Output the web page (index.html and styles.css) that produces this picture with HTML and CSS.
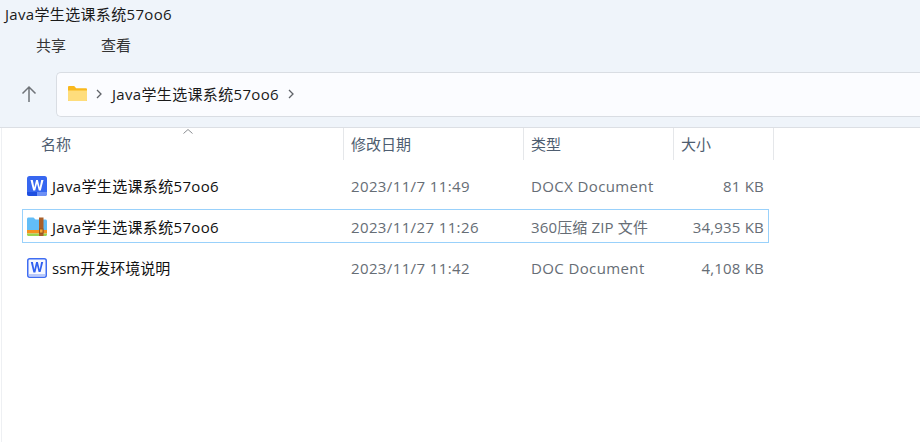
FILE: index.html
```html
<!DOCTYPE html>
<html lang="zh-CN">
<head>
<meta charset="utf-8">
<title>Java学生选课系统57oo6</title>
<link rel="stylesheet" href="styles.css">
</head>
<body>
<header class="top">
  <div class="title wide">Java学生选课系统57oo6</div>
  <nav class="menu"><span>共享</span><span>查看</span></nav>
  <div class="navbar">
    <svg class="up" width="18" height="18" viewBox="0 0 18 18" fill="none" stroke="#6f7378" stroke-width="1.5"><path d="M9 17V2M2.5 8.5 9 2l6.5 6.5"/></svg>
    <div class="address">
      <svg width="19" height="15" viewBox="0 0 19 15"><path d="M0 1.2C0 .5.5 0 1.2 0h5l2 2.2h9.6c.7 0 1.2.5 1.2 1.2V14c0 .6-.5 1-1.2 1H1.2C.5 15 0 14.600 0 14Z" fill="#f9b81d"/><path d="M0 4.500h19V14c0 .6-.5 1-1.200 1H1.200C.5 15 0 14.600 0 14Z" fill="#fedd7c"/></svg>
      <svg class="chev" width="6" height="10" viewBox="0 0 6 10" fill="none" stroke="#5f6368" stroke-width="1.300"><path d="m1 1 4 4-4 4"/></svg>
      <span class="crumb wide">Java学生选课系统57oo6</span>
      <svg class="chev" width="6" height="10" viewBox="0 0 6 10" fill="none" stroke="#5f6368" stroke-width="1.300"><path d="m1 1 4 4-4 4"/></svg>
    </div>
  </div>
</header>
<main class="list">
  <div class="head">
    <div class="col name">名称<svg class="sort" width="10" height="5" viewBox="0 0 10 5" fill="none" stroke="#8a8d91"><path d="m.5 4.500 4.500-4 4.500 4"/></svg></div>
    <div class="col">修改日期</div>
    <div class="col">类型</div>
    <div class="col">大小</div>
  </div>
  <div class="row">
    <div class="file">
      <svg width="20" height="20" viewBox="0 0 20 20"><rect width="20" height="20" rx="2.500" fill="#3767f0"/><path d="M0 16h10v4H2.500A2.500 2.500 0 0 1 0 17.500Z" fill="#1f4fe0"/><path d="M10 16h10v1.500a2.500 2.500 0 0 1-2.500 2.500H10Z" fill="#6d90f5"/><path d="M3.500 4h2.300l1.500 7.500L9.100 4h1.800l1.800 7.500L14.200 4h2.300l-2.700 10.500h-2L10 7.500l-1.800 7h-2Z" fill="#fff"/></svg>
      <span class="wide">Java学生选课系统57oo6</span>
    </div>
    <div class="cell">2023/11/7 11:49</div>
    <div class="cell">DOCX Document</div>
    <div class="cell size">81 KB</div>
  </div>
  <div class="row selected">
    <div class="file">
      <svg width="20" height="20" viewBox="0 0 20 20"><path d="M0 2c0-.8.600-1.500 1.500-1.500h5L8.500 2.500H18.500c.8 0 1.500.7 1.500 1.500v10H0Z" fill="#62bdf7"/><rect y="13" width="20" height="3.500" fill="#f5921e"/><path d="M0 16.500h20v1.300c0 .7-.5 1.200-1.200 1.200H1.200C.5 19 0 18.500 0 17.800Z" fill="#9ad450"/><rect x="12" y="0.500" width="4.500" height="18.500" fill="#a9602a"/><rect x="12.500" y="12" width="3.500" height="4" fill="#f5a83a" stroke="#8a4f1e" stroke-width=".8"/></svg>
      <span class="wide">Java学生选课系统57oo6</span>
    </div>
    <div class="cell">2023/11/27 11:26</div>
    <div class="cell zip">360压缩 ZIP 文件</div>
    <div class="cell size">34,935 KB</div>
  </div>
  <div class="row">
    <div class="file">
      <svg width="20" height="20" viewBox="0 0 20 20"><rect x=".75" y=".75" width="18.500" height="18.500" rx="2" fill="#f6f8ff" stroke="#3f6df2" stroke-width="1.500"/><rect x="2" y="16" width="16" height="2.500" fill="#b9c9fa"/><path d="M3.800 4h2.100l1.400 7.500L9.100 4h1.800l1.800 7.500L14.100 4h2.100l-2.600 10h-2L10 7.500 8.400 14.500h-2Z" fill="#2f5ff0"/></svg>
      <span>ssm开发环境说明</span>
    </div>
    <div class="cell">2023/11/7 11:42</div>
    <div class="cell">DOC Document</div>
    <div class="cell size">4,108 KB</div>
  </div>
</main>
</body>
</html>
```

FILE: styles.css
```css
* { box-sizing: border-box; }
html, body { height: 100%; }
body {
  margin: 0;
  background: #fff;
  color: #1a1a1a;
  font: 15px/20px "Open Sans", "Noto Sans CJK SC", sans-serif;
  overflow: hidden;
}
.wide { letter-spacing: .33px; }
.top {
  height: 128px;
  background: #eff4fa;
  border-bottom: 1px solid #dcdfe4;
  padding: 4px 0 0 5px;
}
.title { height: 20px; }
.menu {
  display: flex;
  gap: 35px;
  margin: 11px 0 0 31px;
  color: #333;
}
.navbar {
  display: flex;
  align-items: center;
  gap: 18px;
  margin: 17px 0 0 15px;
}
.up { margin-top: -2px; }
.address {
  flex: 1;
  height: 45px;
  display: flex;
  align-items: center;
  padding: 0 0 2px 11px;
  background: #fbfcff;
  border: 1px solid #d9dde3;
  border-right: 0;
  border-radius: 5px 0 0 5px;
}
.chev { margin-left: 9px; }
.crumb { margin-left: 10px; }
.crumb + .chev { margin-left: 9px; }
.list {
  height: 314px;
  margin-left: 1px;
  border-left: 1px solid #eef0f3;
}
.head {
  display: grid;
  grid-template-columns: 342px 180px 150px 100px;
  height: 32px;
  color: #4e5d70;
}
.col {
  display: flex;
  align-items: center;
  padding-left: 7px;
  border-right: 1px solid #e5e7ea;
  position: relative;
}
.name { padding-left: 39px; }
.sort { position: absolute; left: 181px; top: 1px; }
.row {
  display: grid;
  grid-template-columns: 321px 180px 150px 91px;
  align-items: center;
  height: 34px;
  width: 747px;
  margin: 7px 0 0 20px;
  padding-top: 2px;
  border: 1px solid transparent;
  color: #666d75;
}
.head + .row { margin-top: 8px; }
.selected { border-color: #99d1fb; }
.file {
  display: flex;
  align-items: center;
  gap: 5px;
  padding-left: 4px;
  color: #111;
}
.cell { padding-left: 7px; white-space: nowrap; letter-spacing: .38px; }
.cell.zip { letter-spacing: .15px; }
.cell.size { text-align: right; padding: 0 1px 0 0; letter-spacing: .2px; }
```
